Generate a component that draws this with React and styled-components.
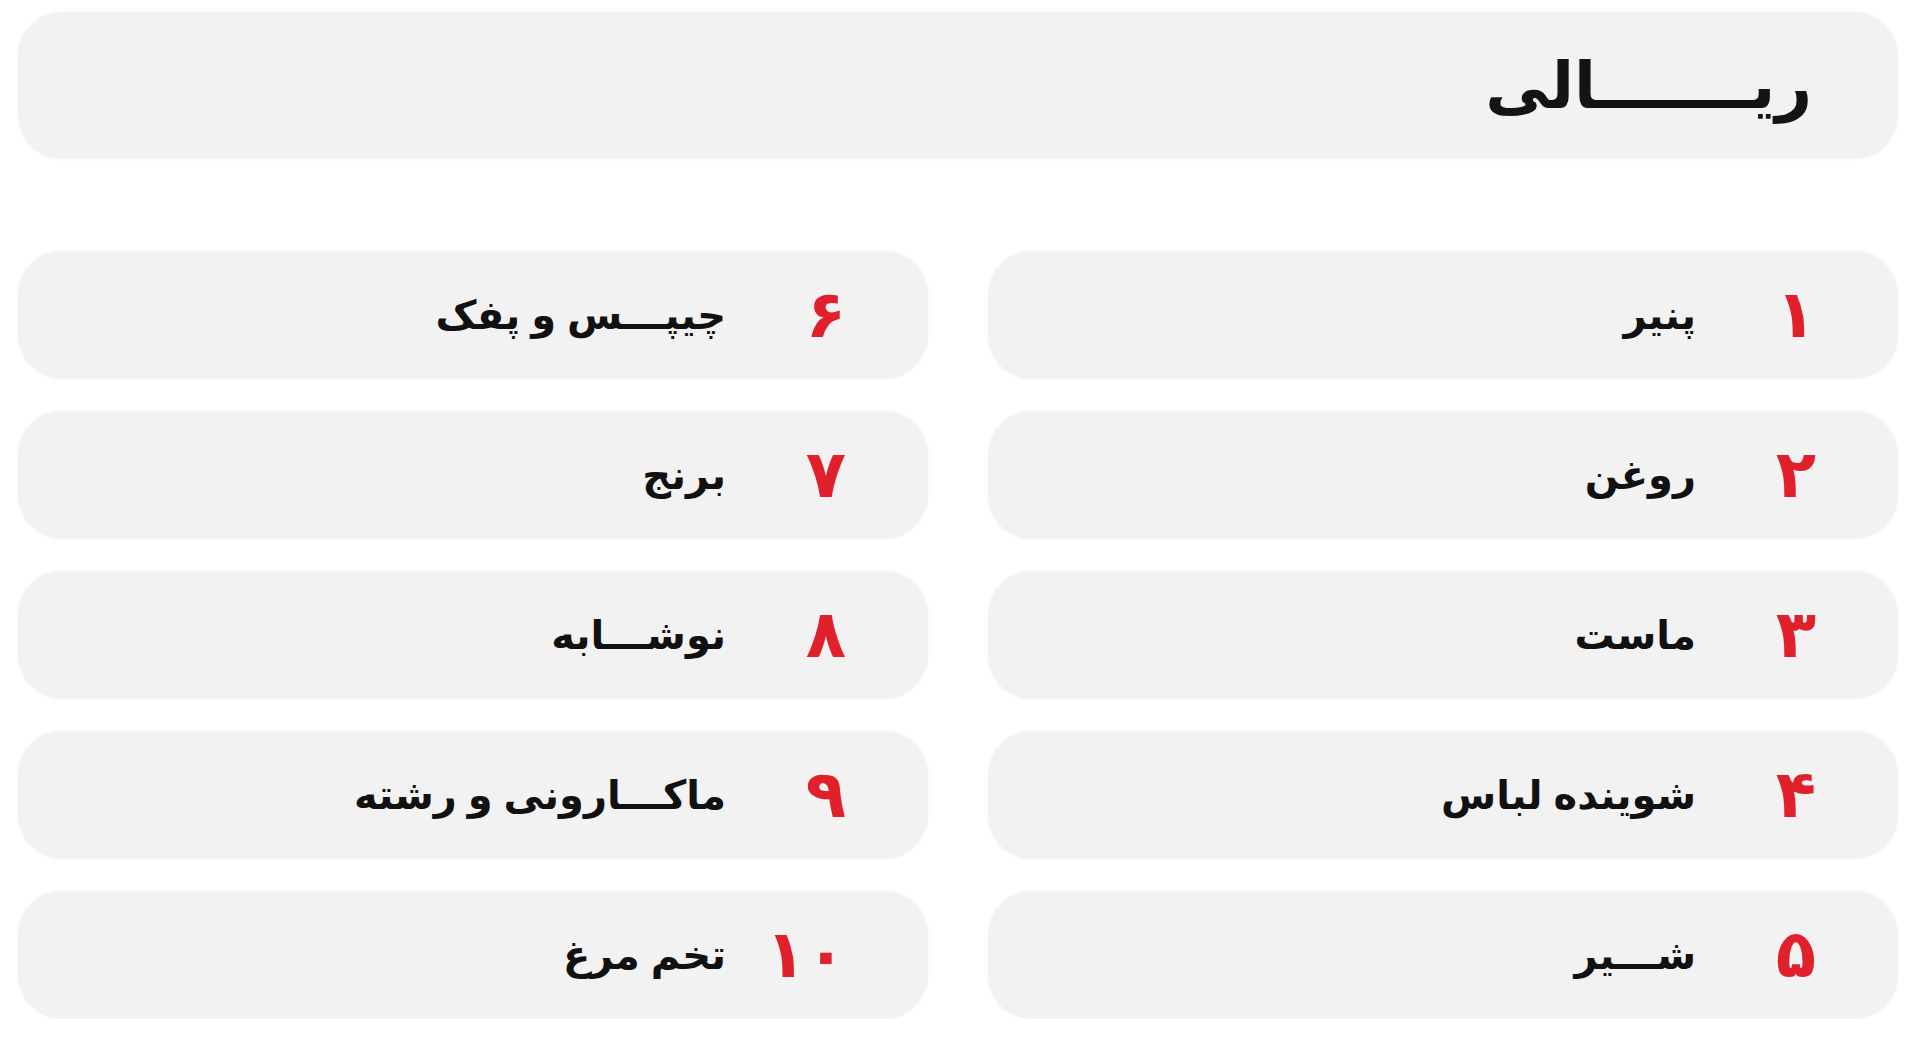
import React from "react";
import styled, { createGlobalStyle } from "styled-components";

const GlobalStyle = createGlobalStyle`
  html, body {
    margin: 0;
    padding: 0;
    background: #ffffff;
  }
  body {
    font-family: "DejaVu Sans", "Noto Sans", sans-serif;
  }
`;

const Page = styled.div`
  direction: rtl;
  padding: 12px 22px 0 18px;
  box-sizing: border-box;
  width: 1920px;
`;

const Header = styled.div`
  height: 147px;
  border-radius: 44px;
  background: #f2f2f2;
  box-shadow: 0 0 4px rgba(0, 0, 0, 0.04);
  display: flex;
  align-items: center;
  padding-right: 86px;
`;

const Title = styled.h1`
  margin: 0;
  font-size: 64px;
  font-weight: 700;
  color: #141414;
  line-height: 1;
`;

const Grid = styled.div`
  margin-top: 92px;
  display: grid;
  grid-template-columns: 910px 910px;
  grid-template-rows: repeat(5, 128px);
  grid-auto-flow: column;
  column-gap: 60px;
  row-gap: 32px;
`;

const Item = styled.div`
  border-radius: 44px;
  background: #f2f2f2;
  box-shadow: 0 0 4px rgba(0, 0, 0, 0.04);
  display: flex;
  align-items: center;
  padding-right: 82px;
`;

const Num = styled.span`
  width: 120px;
  flex: none;
  font-size: 66px;
  font-weight: 700;
  color: #e0202b;
  line-height: 1;
  letter-spacing: -6px;
`;

const Label = styled.span`
  font-size: 40px;
  font-weight: 700;
  color: #111111;
  word-spacing: -3px;
`;

const items = [
  "پنیر",
  "روغن",
  "ماست",
  "شوینده لباس",
  "شـــیر",
  "چیپـــس و پفک",
  "برنج",
  "نوشـــابه",
  "ماکـــارونی و رشته",
  "تخم مرغ",
];

const toFa = n => String(n).replace(/\d/g, d => "۰۱۲۳۴۵۶۷۸۹"[d]);

const App = () => {
  return (
    <Page>
      <GlobalStyle />
      <Header>
        <Title>ریـــــــالی</Title>
      </Header>
      <Grid>
        {items.map((label, i) => (
          <Item key={label}>
            <Num>{toFa(i + 1)}</Num>
            <Label>{label}</Label>
          </Item>
        ))}
      </Grid>
    </Page>
  );
};

export default App;
